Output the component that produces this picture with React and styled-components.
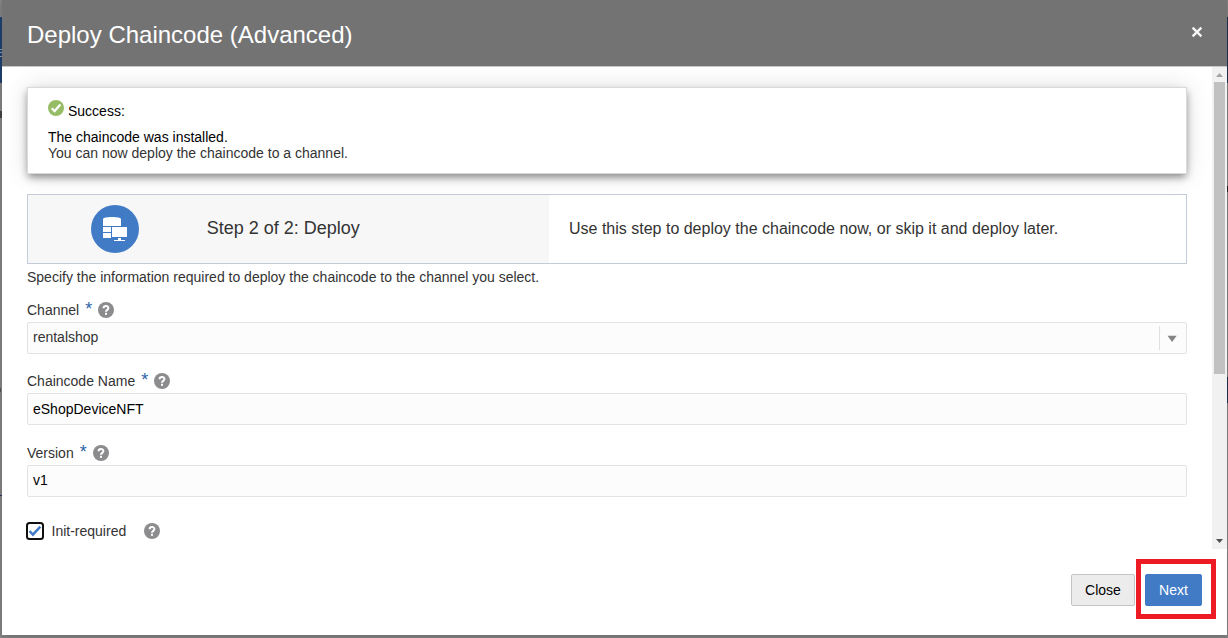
import React from "react";
import styled, { createGlobalStyle } from "styled-components";

const GlobalStyle = createGlobalStyle`
  * { box-sizing: border-box; }
  html, body { margin: 0; padding: 0; overflow: hidden; }
  body { font-family: "Liberation Sans", Arial, sans-serif; font-size: 14px; color: #333; }
`;

const Backdrop = styled.div`
  width: 1228px;
  height: 638px;
  padding: 0 1px 3px 2px;
  overflow: hidden;
  background:
    linear-gradient(#8f99a8, #8f99a8) 0 49px / 2px 1px no-repeat,
    linear-gradient(#8f99a8, #8f99a8) 0 52px / 2px 1px no-repeat,
    linear-gradient(#8f99a8, #8f99a8) 0 56px / 2px 1px no-repeat,
    linear-gradient(#1f4273, #1f4273) 0 17px / 2px 66px no-repeat,
    linear-gradient(#444, #444) 0 111px / 2px 7px no-repeat,
    linear-gradient(#555, #555) 0 388px / 1px 4px no-repeat,
    linear-gradient(#24345c, #24345c) 0 495px / 2px 1px no-repeat,
    linear-gradient(#20344f, #20344f) 100% 17px / 1px 66px no-repeat,
    linear-gradient(#222, #222) 100% 186px / 1px 6px no-repeat,
    linear-gradient(#20344f, #20344f) 100% 377px / 1px 26px no-repeat,
    #858585;
`;

const Dialog = styled.section`
  position: relative;
  display: flex;
  flex-direction: column;
  height: 635px;
  background: #fff;
  box-shadow: 0 2px 8px rgba(0, 0, 0, 0.2);
`;

const Header = styled.header`
  display: flex;
  justify-content: space-between;
  flex: none;
  height: 67px;
  padding: 0 23px 0 25px;
  background: #737373;
  border-bottom: 1px solid #c9c6c6;
  color: #fff;
`;

const Title = styled.h1`
  margin: 0;
  padding-top: 1px;
  font-size: 24px;
  font-weight: 400;
  line-height: 68px;
`;

const CloseIcon = styled.svg`
  display: block;
  width: 14px;
  height: 14px;
  margin-top: 25px;
`;

const Viewport = styled.div`
  display: flex;
  flex: none;
  height: 482px;
  overflow: hidden;
`;

const Content = styled.main`
  flex: 1;
  padding: 20px 25px 0;
`;

const Scrollbar = styled.div`
  display: flex;
  flex-direction: column;
  align-items: center;
  justify-content: space-between;
  flex: none;
  width: 15px;
  background: #f1f1f1;
`;

const ScrollTop = styled.div`
  display: flex;
  flex-direction: column;
`;

const Arrow = styled.svg`
  display: block;
  width: 15px;
  height: 15px;
`;

const Thumb = styled.div`
  align-self: center;
  width: 11px;
  height: 292px;
  background: #c1c1c1;
`;

const Message = styled.div`
  height: 87px;
  padding: 12px 20px 0;
  background: #fff;
  border: 1px solid #d9dadb;
  box-shadow: 0 4px 8px -1px rgba(0, 0, 0, 0.45), 0 0 24px rgba(0, 0, 0, 0.12);
  color: #000;
`;

const MessageTitle = styled.div`
  display: flex;
  gap: 4px;
  height: 29px;
  line-height: 22px;
`;

const StatusIcon = styled.svg`
  width: 16px;
  height: 16px;
`;

const MessageLine = styled.div`
  line-height: 16px;
  color: ${(p) => (p.$soft ? "#333" : "#000")};
`;

const StepPanel = styled.div`
  display: flex;
  height: 70px;
  margin-top: 20px;
  border: 1px solid #c4cbd8;
`;

const StepName = styled.div`
  display: flex;
  align-items: center;
  gap: 67.7px;
  width: 521px;
  padding-left: 63px;
  background: #f7f7f7;
  font-size: 18px;
`;

const StepIcon = styled.svg`
  width: 48px;
  height: 48px;
`;

const StepLabel = styled.span`
  padding-bottom: 2px;
`;

const StepHint = styled.div`
  padding-left: 20px;
  font-size: 16px;
  line-height: 68px;
`;

const Intro = styled.p`
  margin: 0;
  height: 34px;
  padding-top: 5px;
  line-height: 16px;
`;

const Field = styled.div`
  height: ${(p) => p.$height}px;
`;

const FieldLabel = styled.label`
  display: flex;
  height: 24px;
  line-height: 24px;
`;

const Required = styled.span`
  width: 7px;
  margin: 0 6px;
  font-size: 18px;
  line-height: 23px;
  color: #2f64a8;
`;

const Help = styled.svg`
  width: 16px;
  height: 16px;
  margin-top: ${(p) => (p.$inline ? 0 : 4)}px;
`;

const Input = styled.div`
  display: flex;
  align-items: center;
  justify-content: space-between;
  height: 32px;
  padding: 0 0 ${(p) => (p.$lift ? 2 : 0)}px 5px;
  border: 1px solid #e3e3e4;
  border-radius: 2px;
  background: #fcfcfc;
  color: ${(p) => (p.$select ? "#333" : "#000")};
`;

const Dropdown = styled.svg`
  width: 27px;
  height: 24px;
  margin-top: 2px;
  border-left: 1px solid #dfe0e1;
`;

const CheckRow = styled.div`
  display: flex;
  align-items: center;
  height: 18px;
  margin-left: -1px;
`;

const CheckIcon = styled.svg`
  width: 18px;
  height: 18px;
  margin-right: 7.5px;
`;

const CheckLabel = styled.span`
  margin-right: 17.5px;
`;

const Footer = styled.footer`
  display: flex;
  gap: 10px;
  justify-content: flex-end;
  padding: 25px 25px 0 0;
`;

const Button = styled.button`
  width: ${(p) => (p.$primary ? 57 : 64)}px;
  height: 32px;
  padding: 0;
  border: 1px solid ${(p) => (p.$primary ? "#417bc6" : "#c4c4c4")};
  border-radius: 2px;
  background: ${(p) => (p.$primary ? "#417bc6" : "#ececec")};
  color: ${(p) => (p.$primary ? "#fff" : "#000")};
  font: 14px "Liberation Sans", Arial, sans-serif;
`;

const Highlight = styled.div`
  position: absolute;
  top: 559px;
  right: 11px;
  width: 80px;
  height: 60px;
  border: 5px solid #ed1c24;
  pointer-events: none;
`;

const HelpIcon = ({ inline }) => (
  <Help viewBox="0 0 16 16" $inline={inline}>
    <circle cx="8" cy="8" r="8" fill="#8c8c8e" />
    <path d="M5.6 6.3C5.6 3.3 10.4 3.3 10.4 6.1C10.4 7.9 8 7.8 8 9.8" fill="none" stroke="#fff" strokeWidth="2" />
    <rect x="7" y="10.8" width="2" height="2" fill="#fff" />
  </Help>
);

const TextField = ({ label, value, height, select, lift }) => (
  <Field $height={height}>
    <FieldLabel>
      {label}
      <Required>*</Required>
      <HelpIcon />
    </FieldLabel>
    <Input $select={select} $lift={lift}>
      {value}
      {select && (
        <Dropdown viewBox="0 0 26 24">
          <path d="M7.5 9.8h9.2L12.1 16z" fill="#858585" />
        </Dropdown>
      )}
    </Input>
  </Field>
);

export default function App() {
  return (
    <Backdrop>
      <GlobalStyle />
      <Dialog>
        <Header>
          <Title>Deploy Chaincode (Advanced)</Title>
          <CloseIcon viewBox="0 0 14 14">
            <path d="M2.6 2.6l8.8 8.8M11.4 2.6l-8.8 8.8" stroke="#f4f4f4" strokeWidth="2.4" />
          </CloseIcon>
        </Header>
        <Viewport>
          <Content>
            <Message>
              <MessageTitle>
                <StatusIcon viewBox="0 0 16 16">
                  <circle cx="8" cy="8" r="8" fill="#96bd66" />
                  <path d="M3.7 8.2l2.9 2.9 5.8-6.6" fill="none" stroke="#fff" strokeWidth="2.3" />
                </StatusIcon>
                Success:
              </MessageTitle>
              <MessageLine>The chaincode was installed.</MessageLine>
              <MessageLine $soft>You can now deploy the chaincode to a channel.</MessageLine>
            </Message>
            <StepPanel>
              <StepName>
                <StepIcon viewBox="0 0 48 48">
                  <circle cx="24" cy="24" r="24" fill="#417bc6" />
                  <g fill="#fff">
                    <path d="M12 14c0-2.7 18-2.7 18 0v7H12z" />
                    <path d="M12 22h8v5h-8zM12 28h8v5h-8z" />
                    <path d="M21 22h15v10H21zM27 33h3v2h4v1H23v-1h4z" />
                  </g>
                </StepIcon>
                <StepLabel>Step 2 of 2: Deploy</StepLabel>
              </StepName>
              <StepHint>Use this step to deploy the chaincode now, or skip it and deploy later.</StepHint>
            </StepPanel>
            <Intro>Specify the information required to deploy the chaincode to the channel you select.</Intro>
            <TextField label="Channel" value="rentalshop" height={71} select lift />
            <TextField label="Chaincode Name" value="eShopDeviceNFT" height={72} />
            <TextField label="Version" value="v1" height={81} lift />
            <CheckRow>
              <CheckIcon viewBox="0 0 18 18">
                <rect x="1" y="1" width="16" height="16" rx="2.5" fill="#fff" stroke="#101010" strokeWidth="2" />
                <path d="M3.5 9l3.4 3.6 7.5-8" fill="none" stroke="#417bc6" strokeWidth="2.5" />
              </CheckIcon>
              <CheckLabel>Init-required</CheckLabel>
              <HelpIcon inline />
            </CheckRow>
          </Content>
          <Scrollbar>
            <ScrollTop>
              <Arrow viewBox="0 0 15 15">
                <path d="M4 10h7L7.5 6z" fill="#a3a3a3" />
              </Arrow>
              <Thumb />
            </ScrollTop>
            <Arrow viewBox="0 0 15 15">
              <path d="M4 5h7L7.5 9z" fill="#505050" />
            </Arrow>
          </Scrollbar>
        </Viewport>
        <Footer>
          <Button>Close</Button>
          <Button $primary>Next</Button>
        </Footer>
        <Highlight />
      </Dialog>
    </Backdrop>
  );
}
